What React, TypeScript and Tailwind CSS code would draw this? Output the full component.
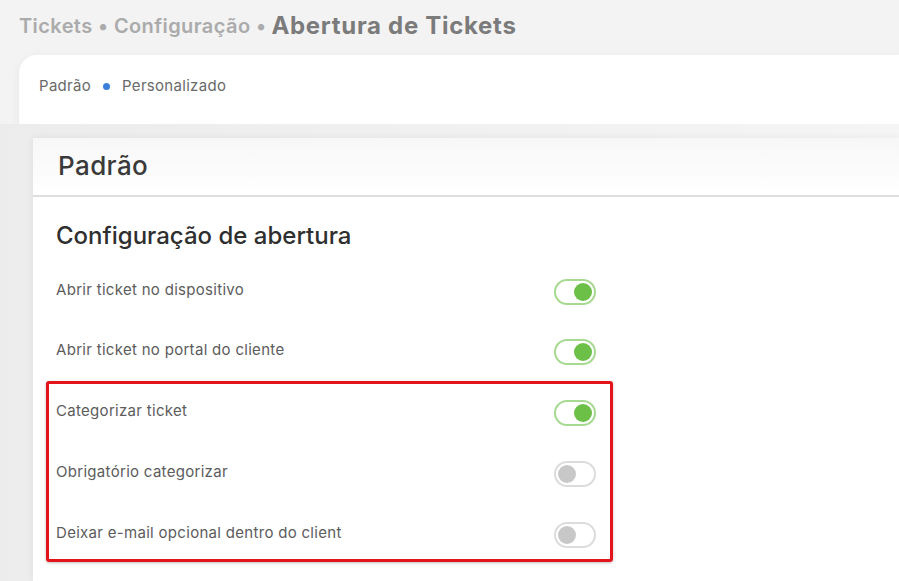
import React from 'react'

type Row = { label: string; on: boolean }

const topRows: Row[] = [
  { label: 'Abrir ticket no dispositivo', on: true },
  { label: 'Abrir ticket no portal do cliente', on: true },
]

const boxedRows: Row[] = [
  { label: 'Categorizar ticket', on: true },
  { label: 'Obrigatório categorizar', on: false },
  { label: 'Deixar e-mail opcional dentro do client', on: false },
]

function Toggle({ on }: { on: boolean }) {
  return (
    <div
      className={
        on
          ? 'flex h-[26px] w-[42px] items-center justify-end rounded-full border-2 border-[#a6da90] bg-white px-[2px]'
          : 'flex h-[26px] w-[42px] items-center justify-start rounded-full border-2 border-[#dcdcdc] bg-white px-[2px]'
      }
    >
      <span className={on ? 'h-[18px] w-[18px] rounded-full bg-[#6cbf47]' : 'h-[18px] w-[18px] rounded-full bg-[#c8c8c8]'} />
    </div>
  )
}

function SettingRow({ row }: { row: Row }) {
  return (
    <div className="flex items-center justify-between">
      <span className="pb-[3px] text-[15px] tracking-[0.3px] text-[#5c5c5c]">{row.label}</span>
      <Toggle on={row.on} />
    </div>
  )
}

export default function App() {
  return (
    <div
      className="flex h-[581px] w-[899px] flex-col overflow-hidden bg-[#f3f3f3]"
      style={{ fontFamily: 'Inter, "Noto Sans", sans-serif' }}
    >
      <div className="flex h-[55px] items-center gap-[5px] pb-[3px] pl-[19px]">
        <span className="text-[20px] font-semibold tracking-[0.4px] text-[#ababab]">Tickets • Configuração •</span>
        <span className="text-[24px] font-bold tracking-[0.7px] text-[#7b7b7b]">Abertura de Tickets</span>
      </div>

      <div className="ml-[19px] flex h-[69px] items-center gap-[12px] rounded-tl-[18px] bg-white pb-[6px] pl-[20px] shadow-[0_2px_10px_rgba(0,0,0,0.06)]">
        <span className="text-[15px] tracking-[0.3px] text-[#6a6a6a]">Padrão</span>
        <span className="h-[7px] w-[7px] rounded-full bg-[#3c7fd9]" />
        <span className="text-[15px] tracking-[0.3px] text-[#6a6a6a]">Personalizado</span>
      </div>

      <div className="flex flex-1 bg-gradient-to-r from-[#ececec] to-[#f5f5f5] pt-[14px]">
        <div className="ml-[33px] flex flex-1 flex-col bg-white shadow-[0_0_8px_rgba(0,0,0,0.06)]">
          <div className="flex h-[59px] items-center border-b-2 border-[#dedede] bg-gradient-to-b from-[#f7f7f7] to-white pb-[3px] pl-[25px]">
            <h1 className="text-[26px] font-medium tracking-[0.4px] text-[#3a3a3a]">Padrão</h1>
          </div>

          <div className="pt-[24px]">
            <div className="flex w-[580px] flex-col gap-[34px] pl-[23px] pr-[17px]">
              <h2 className="mb-[-6px] h-[30px] text-[24px] font-medium leading-[30px] text-[#2f2f2f]">
                Configuração de abertura
              </h2>
              {topRows.map((r) => (
                <SettingRow key={r.label} row={r} />
              ))}
            </div>
            <div className="ml-[13px] mt-[16px] flex w-[567px] flex-col gap-[35px] rounded-[3px] border-[3px] border-[#e3141a] pb-[11px] pl-[7px] pr-[14px] pt-[16px] shadow-[0_1px_3px_rgba(0,0,0,0.25)]">
              {boxedRows.map((r) => (
                <SettingRow key={r.label} row={r} />
              ))}
            </div>
          </div>
        </div>
      </div>
    </div>
  )
}
